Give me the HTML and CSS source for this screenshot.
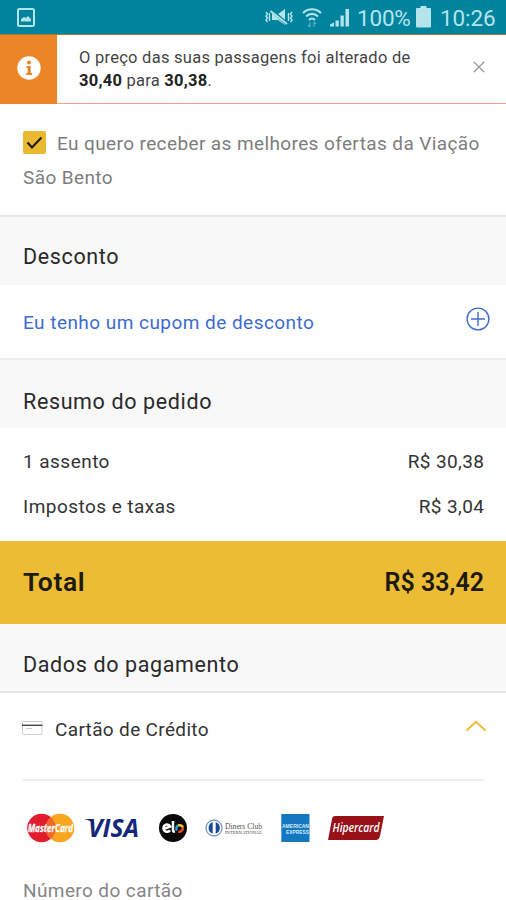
FILE: index.html
```html
<!DOCTYPE html>
<html lang="pt-BR">
<head>
<meta charset="utf-8">
<meta name="viewport" content="width=device-width">
<title>Pagamento</title>
<link rel="stylesheet" href="styles.css">
</head>
<body>
<header class="status">
  <svg class="status-picture" width="18" height="19" viewBox="0 0 18 19"><rect x="1" y="1" width="16" height="17" rx="1.5" fill="none" stroke="#b5e4ec" stroke-width="2"/><path d="M4 13.5V11l3-2 2 1 2-2 3 3v2.5z" fill="#b5e4ec"/></svg>
  <div class="status-right">
    <svg width="28" height="18" viewBox="0 0 28 18" fill="none" stroke="#b5e4ec" stroke-width="1.4"><path d="M1 4l1.500 2L1 8l1.500 2L1 12l1.500 2M4.500 5v8M27 4l-1.500 2L27 8l-1.500 2 1.500 2-1.500 2M23.500 5v8"/><path d="M7 6h6l7-5v16l-7-5H7z" fill="#b5e4ec" stroke="none"/><path d="M6 2l16 14" stroke="#00849e" stroke-width="3.500"/><path d="M5.500 3l16.500 13" stroke-width="1.900"/></svg>
    <svg class="wifi" width="20" height="20" viewBox="0 0 20 20" fill="none" stroke="#b5e4ec" stroke-width="2.100"><path d="M1 5c5-5 13-5 18 0M4 8.500c3.500-3.500 8.500-3.500 12 0M7 12c2-2 4-2 6 0"/><path d="M8 14v5m-2-2 2 2M12 19v-5m2 2-2-2" stroke="#58b1c1" stroke-width="1.200"/></svg>
    <svg class="signal" width="20" height="19" viewBox="0 0 20 19" fill="#b5e4ec"><path d="M0 18.500v-2l4-2v4zM5.500 18.500v-6h3.300v6zM10.500 18.500v-11h3.300v11zM15.500 18.500V1H19v17.500z"/></svg>
    <span class="percent">100%</span>
    <svg class="battery" width="15" height="22" viewBox="0 0 15 22" fill="#b5e4ec"><path d="M4.500 0h6v2H14q1 0 1 1v17q0 1.500-1 1.500H1q-1 0-1-1.500V3q0-1 1-1h3.500z"/></svg>
    <span class="clock">10:26</span>
  </div>
</header>
<main>
  <section class="notice">
    <div class="notice-icon"><svg width="24" height="24" viewBox="0 0 24 24"><circle cx="12" cy="12" r="11.700" fill="#fff"/><circle cx="12" cy="6.500" r="2" fill="#ec8526"/><path d="M9.500 10h4.200v7H15v2H9.300v-2h1.400v-5H9.500z" fill="#ec8526"/></svg></div>
    <p class="notice-text"><span class="l1">O preço das suas passagens foi alterado de</span><br><span class="l2"><b>30,40</b> para <b>30,38</b>.</span></p>
    <svg class="close" width="12" height="12" viewBox="0 0 12 12" stroke="#999" stroke-width="1.300"><path d="M.7.7l10.600 10.600M11.300.7.7 11.300"/></svg>
  </section>
  <section class="consent">
    <p><span class="check"><svg width="22" height="22" viewBox="0 0 22 22" fill="none"><path d="M4.500 11.500l4.500 5 9.500-10" stroke="#221d11" stroke-width="2.200"/></svg></span><span class="c1">Eu quero receber as melhores ofertas da Viação</span><br><span class="c2">São Bento</span></p>
  </section>
  <h2 class="band first"><span class="t-desc">Desconto</span></h2>
  <section class="coupon">
    <span class="t-coupon">Eu tenho um cupom de desconto</span>
    <svg width="24" height="24" viewBox="0 0 24 24" fill="none" stroke="#3c6cd0" stroke-width="1.400"><circle cx="12" cy="12" r="10.900"/><path d="M12 5v14M5 12h14"/></svg>
  </section>
  <h2 class="band second"><span class="t-res">Resumo do pedido</span></h2>
  <dl class="summary">
    <div><dt class="t-seat">1 assento</dt><dd>R$ 30,38</dd></div>
    <div><dt class="t-tax">Impostos e taxas</dt><dd>R$ 3,04</dd></div>
  </dl>
  <section class="total"><span class="t-total">Total</span><span class="t-sum">R$ 33,42</span></section>
  <h2 class="band third"><span class="t-pay">Dados do pagamento</span></h2>
  <section class="payment">
    <div class="method">
      <svg class="card" width="21" height="15" viewBox="0 0 21 15"><rect x=".5" y=".5" width="19.500" height="13" rx="1" fill="#fff" stroke="#ccc"/><path d="M0 4.300h20.500" stroke="#444" stroke-width="1.400"/><path d="M4 7.500h6" stroke="#ccc"/></svg>
      <span class="t-card">Cartão de Crédito</span>
      <svg class="chevron" width="22" height="12" viewBox="0 0 22 12" fill="none" stroke="#edbb35" stroke-width="1.900"><path d="M1.500 10.500L11 1.800l9.500 8.700"/></svg>
    </div>
    <div class="brands">
      <svg width="49" height="30" viewBox="0 0 49 30"><circle cx="14.500" cy="15" r="14.300" fill="#e21b2d"/><circle cx="33" cy="15" r="14.300" fill="#faa51f"/><path d="M23.750 4.100a14.300 14.300 0 0 1 0 21.800a14.300 14.300 0 0 1 0-21.800" fill="#f0672a"/><text x="1" y="18.500" textLength="45" lengthAdjust="spacingAndGlyphs" font-size="10" class="mark" fill="#fff" stroke="#fff" stroke-width=".3">MasterCard</text></svg>
      <svg width="56" height="30" viewBox="0 0 56 30"><text x="4" y="24" textLength="51" lengthAdjust="spacingAndGlyphs" font-size="24.500" class="mark" fill="#15277a">VISA</text><path d="M0 6h9l1.500 5.500q-3-4-10.500-5.500" fill="#15277a"/></svg>
      <svg width="28" height="30" viewBox="0 0 28 30"><circle cx="14" cy="15" r="14" fill="#080808"/><g fill="none" stroke-width="2.500"><path d="M4.700 16l6.500-2.500a3.600 3.600 0 1 0-.2 3.700" stroke="#fff"/><path d="M14 8v9q0 2 2 1.500" stroke="#fff"/><path d="M18 17.500a3.500 3.500 0 0 1 1-5" stroke="#209ed5"/><path d="M19 12.500a3.500 3.500 0 0 1 4.800 2" stroke="#f4c72d"/><path d="M23.800 14.500a3.500 3.500 0 0 1-4.500 4" stroke="#e64331"/></g></svg>
      <svg width="58" height="30" viewBox="0 0 58 30"><circle cx="9" cy="15" r="8" fill="#fff" stroke="#7899c1" stroke-width="1.300"/><path d="M7.700 9.300a6 6 0 0 0 0 11.400zM10.700 9.300a6 6 0 0 1 0 11.400z" fill="#184a9c"/><text x="20" y="15.500" textLength="37" lengthAdjust="spacingAndGlyphs" font-size="8.500" class="serif" fill="#555">Diners Club</text><text x="20" y="20.500" textLength="37" lengthAdjust="spacingAndGlyphs" font-size="4.800" class="serif" fill="#444">INTERNATIONAL</text></svg>
      <svg width="29" height="30" viewBox="0 0 29 30"><path d="M.3 1h28.200v28H.3z" fill="#1478c1"/><text x="1" y="15" textLength="27" lengthAdjust="spacingAndGlyphs" font-size="6" class="sans" fill="#d5eaff">AMERICAN</text><text x="5" y="20.500" textLength="23" lengthAdjust="spacingAndGlyphs" font-size="6" class="sans" fill="#d5eaff">EXPRESS</text></svg>
      <svg width="56" height="30" viewBox="0 0 56 30"><path d="M7 3h49l-4 20q-1 4-4 4H0L4 6q.5-3 3-3" fill="#981117"/><text x="4.500" y="18.500" textLength="47" lengthAdjust="spacingAndGlyphs" font-size="12" class="hiper" fill="#fff">Hipercard</text></svg>
    </div>
    <label class="number">Número do cartão</label>
  </section>
</main>
</body>
</html>
```
FILE: styles.css
```css
* { box-sizing: border-box; }
body { margin: 0; background: #fff; color: #333; font: 19px/24px Roboto, "Liberation Sans", sans-serif; }
h2, p, dl, dd { margin: 0; font-weight: 400; }
svg { display: block; flex: none; overflow: visible; }
span, dt, dd, label { white-space: nowrap; }
.status { height: 35px; display: flex; justify-content: space-between; align-items: flex-start; padding: 8px 11px 0 17px; background: #00849e; border-bottom: 1px solid #a9742f; color: #b5e4ec; }
.status-right { display: flex; align-items: flex-start; font-size: 22.5px; line-height: 21px; }
.wifi { margin-left: 9px; }
.signal { margin-left: 8px; }
.percent { width: 55px; margin-left: 7px; letter-spacing: -.2px; }
.battery { margin: -2px 9px 0 4px; }
.clock { width: 55px; letter-spacing: -.1px; }
.notice { height: 69px; display: flex; align-items: stretch; border-bottom: 1px solid #f1a286; }
.notice-icon { width: 57px; height: 69px; background: #ec8526; padding: 21px 0 0 17px; }
.notice-text { flex: 1; padding: 12px 0 0 22px; font-size: 16.5px; line-height: 22px; color: #444; }
.notice-text b { color: #222; }
.notice-text .l2 { position: relative; top: 1px; }
.close { margin: 26px 21px 0 0; }
.consent { height: 113px; padding: 23px 23px 0; border-bottom: 2px solid #e9e9e9; color: #7d7d7d; line-height: 33.5px; }
.check { display: inline-block; vertical-align: -4px; width: 23px; height: 23px; margin-right: 11px; border-radius: 2px; background: #e9b92f; }
.band { background: #f8f8f8; padding-left: 23px; font-size: 21.5px; line-height: 26px; color: #292929; }
.first { height: 68px; padding-top: 27px; }
.coupon { height: 75px; display: flex; justify-content: space-between; padding: 22px 16px 0 23px; border-bottom: 2px solid #eee; color: #3c6cd0; }
.t-coupon { padding-top: 4px; }
.second { height: 68px; padding-top: 29px; }
.summary { height: 113px; padding: 22px 22px 0 23px; }
.summary div { display: flex; justify-content: space-between; height: 45px; }
.summary dd { letter-spacing: .4px; margin-right: -.4px; }
.total { height: 83px; display: flex; justify-content: space-between; align-items: baseline; padding: 26px 22px 0 23px; background: #edbc35; color: #1d1a10; font-weight: 600; font-size: 26.5px; line-height: 30px; }
.t-total { letter-spacing: .6px; }
.t-sum { font-size: 25px; }
.third { height: 69px; padding-top: 28px; border-bottom: 2px solid #e5e5e5; }
.payment { padding: 0 22px 0 23px; }
.method { height: 88px; display: flex; padding-top: 25px; border-bottom: 2px solid #eee; }
.card { margin: 3px 11px 0 -1px; }
.chevron { margin: 2px -3px 0 auto; }
.brands { display: flex; padding: 32px 0 0 4px; height: 97px; }
.brands svg:nth-child(2) { margin-left: 8px; }
.brands svg:nth-child(3) { margin-left: 19px; }
.brands svg:nth-child(4) { margin-left: 18px; }
.brands svg:nth-child(5) { margin-left: 18px; }
.brands svg:nth-child(6) { margin-left: 18px; }
.mark { font-family: "Open Sans", sans-serif; font-style: italic; font-weight: 700; }
.hiper { font-family: "Open Sans", sans-serif; font-style: italic; font-weight: 600; }
.serif { font-family: "Liberation Serif", serif; }
.sans { font-family: "Liberation Sans", sans-serif; font-weight: 700; }
.number { display: block; height: 23px; padding-top: 2px; line-height: 21px; color: #858585; }
.l1 { letter-spacing: .26px; }
.l2 { letter-spacing: .25px; }
.c1, .c2 { letter-spacing: .39px; }
.t-coupon { letter-spacing: .46px; }
.t-desc, .t-res, .t-pay { letter-spacing: .63px; }
.t-seat, .t-tax { letter-spacing: .46px; }
.t-card { padding-left: 1px; letter-spacing: .34px; }
.number { letter-spacing: .4px; }
```
